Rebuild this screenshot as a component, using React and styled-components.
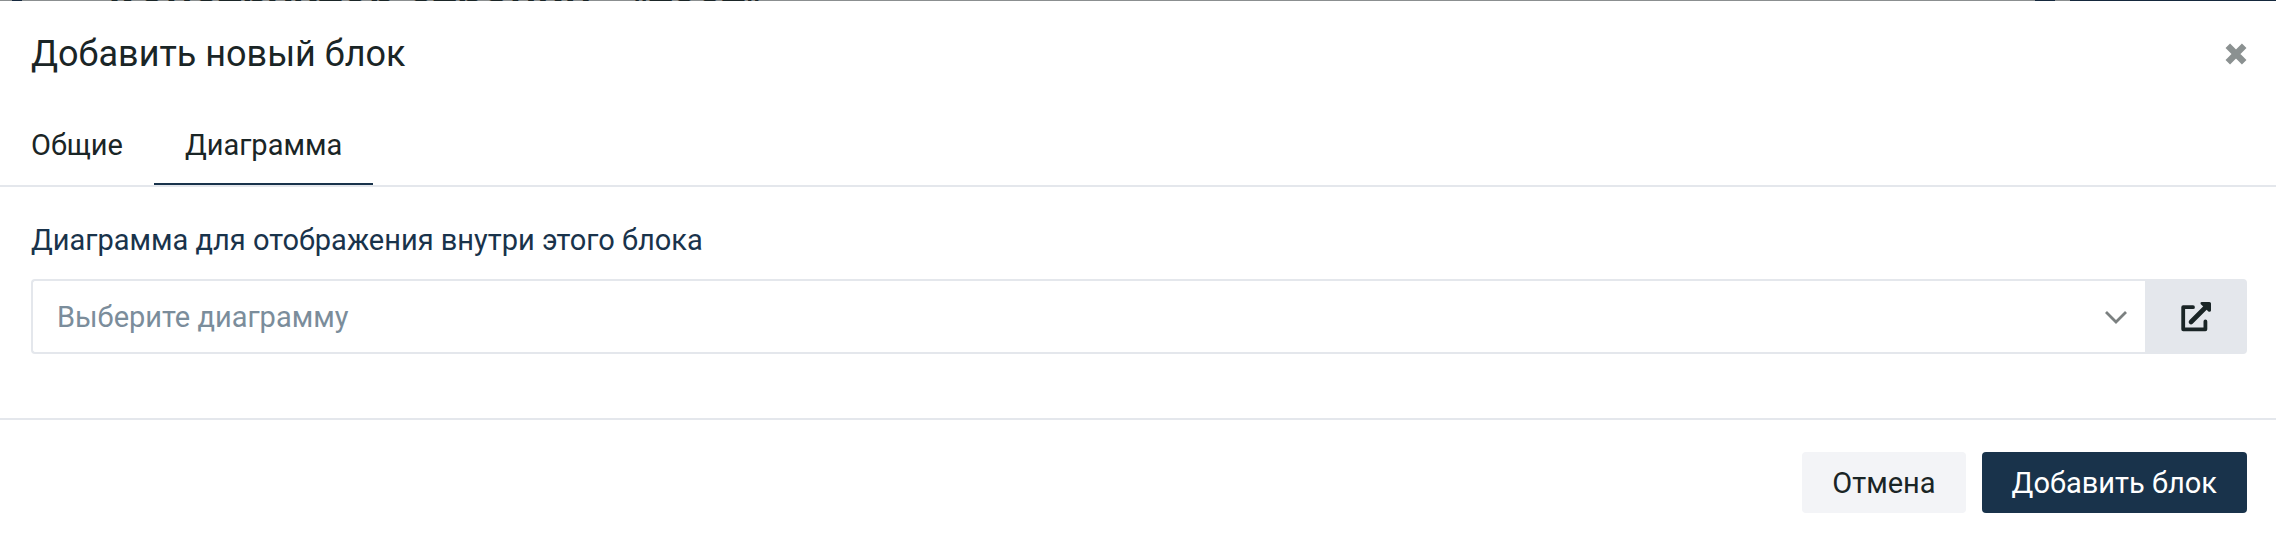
import React, { useState } from 'react';
import styled, { createGlobalStyle } from 'styled-components';

const tabs = ['Общие', 'Диаграмма'];

const App = () => {
    const [active, setActive] = useState('Диаграмма');

    return (
        <>
            <GlobalStyle />
            <PageStrip aria-hidden='true'>
                <StripMark />
                <StripTitle>Конструктор страниц - "тест"</StripTitle>
                <StripSmall />
                <StripButton />
            </PageStrip>
            <Modal role='dialog' aria-labelledby='modal-title'>
                <ModalHeader>
                    <Title id='modal-title'>Добавить новый блок</Title>
                    <CloseButton type='button' aria-label='Закрыть'>
                        <svg width='22' height='22' viewBox='0 0 22 22'>
                            <path d='M2.8 2.8L19.2 19.2M19.2 2.8L2.8 19.2' stroke='currentColor' strokeWidth='6.4' />
                        </svg>
                    </CloseButton>
                </ModalHeader>
                <TabList role='tablist'>
                    {tabs.map((tab) => (
                        <Tab
                            key={tab}
                            type='button'
                            role='tab'
                            aria-selected={active === tab}
                            $active={active === tab}
                            onClick={() => setActive(tab)}
                        >
                            {tab}
                        </Tab>
                    ))}
                </TabList>
                <ModalBody>
                    <Label htmlFor='chart'>Диаграмма для отображения внутри этого блока</Label>
                    <Field>
                        <SelectBox>
                            <Select id='chart' defaultValue=''>
                                <option value=''>Выберите диаграмму</option>
                            </Select>
                            <Arrow width='24' height='14' viewBox='0 0 24 14' aria-hidden='true'>
                                <path d='M2 2L12 12L22 2' fill='none' stroke='currentColor' strokeWidth='2.8' />
                            </Arrow>
                        </SelectBox>
                        <OpenButton type='button' aria-label='Открыть'>
                            <svg width='30' height='30' viewBox='0 0 30 30' fill='none' stroke='currentColor'>
                                <path d='M12 5.2H2.2V27.3H24.4V19.5' strokeWidth='3.8' strokeLinejoin='round' strokeLinecap='round' />
                                <path d='M10 20L25 5' strokeWidth='4.6' strokeLinecap='round' />
                                <path d='M20.6 0H28.4Q30 0 30 1.6V8.6Q29.6 10.4 27.4 9.6L19.6 2Q19 0.2 20.6 0Z' fill='currentColor' stroke='none' />
                            </svg>
                        </OpenButton>
                    </Field>
                </ModalBody>
                <ModalFooter>
                    <Button type='button'>Отмена</Button>
                    <Button type='button' $primary>Добавить блок</Button>
                </ModalFooter>
            </Modal>
        </>
    );
};

export default App;

const GlobalStyle = createGlobalStyle`
    *{
        box-sizing: border-box;
    }
    body{
        margin: 0;
        background: #fff;
        color: #1a2526;
        font-family: Roboto, "Liberation Sans", sans-serif;
        font-size: 29px;
        line-height: 34px;
    }
    button, select{
        font: inherit;
        color: inherit;
        border: 0;
        cursor: pointer;
    }
`

const PageStrip = styled.div`
    display: flex;
    align-items: center;
    height: 1px;
    padding-left: 12px;
    background: #8b8f90;
    overflow: hidden;
`
const StripMark = styled.span`
    width: 10px;
    height: 1px;
    background: #15283d;
`
const StripTitle = styled.span`
    flex: 1;
    padding: 16px 0 0 86px;
    font-size: 48px;
    line-height: 54px;
    font-weight: 500;
`
const StripSmall = styled.span`
    width: 20px;
    height: 1px;
    margin-right: 15px;
    background: #15283d;
`
const StripButton = styled.span`
    width: 206px;
    height: 1px;
    background: #15283d;
`

const Modal = styled.div`
    background: #fff;
`
const ModalHeader = styled.div`
    display: flex;
    align-items: center;
    justify-content: space-between;
    padding: 32px 29px 32px 31px;
`
const Title = styled.h2`
    margin: 0;
    font-size: 36px;
    line-height: 42px;
    font-weight: 400;
`
const CloseButton = styled.button`
    display: flex;
    padding: 0;
    background: none;
    color: #8b9191;
`

const TabList = styled.div`
    display: flex;
    border-bottom: 2px solid #e4e7ec;
`
const Tab = styled.button`
    height: 78px;
    padding: 0 31px;
    background: none;
    border-bottom: 2px solid ${({ $active }) => ($active ? '#19334b' : 'transparent')};
`

const ModalBody = styled.div`
    padding: 36px 29px 64px 31px;
    border-bottom: 2px solid #e4e7ec;
`
const Label = styled.label`
    display: block;
    margin-bottom: 22px;
    color: #19334b;
`
const Field = styled.div`
    display: flex;
    height: 75px;
`
const SelectBox = styled.div`
    position: relative;
    flex: 1;
`
const Select = styled.select`
    width: 100%;
    height: 100%;
    padding: 0 60px 0 24px;
    appearance: none;
    background: #fff;
    border: 2px solid #e4e7ec;
    border-right: 0;
    border-radius: 4px 0 0 4px;
    color: #7b8d9b;
`
const Arrow = styled.svg`
    position: absolute;
    top: 31px; right: 17px;
    color: #7b8080;
    pointer-events: none;
`
const OpenButton = styled.button`
    display: flex;
    align-items: center;
    justify-content: center;
    width: 102px;
    background: #e4e7ec;
    border-radius: 0 4px 4px 0;
`

const ModalFooter = styled.div`
    display: flex;
    justify-content: flex-end;
    gap: 16px;
    padding: 32px 29px 24px;
`
const Button = styled.button`
    height: 61px;
    padding: 0 30px;
    border-radius: 4px;
    background: ${({ $primary }) => ($primary ? '#19334b' : '#f3f4f7')};
    color: ${({ $primary }) => ($primary ? '#fff' : '#1a2526')};
`
